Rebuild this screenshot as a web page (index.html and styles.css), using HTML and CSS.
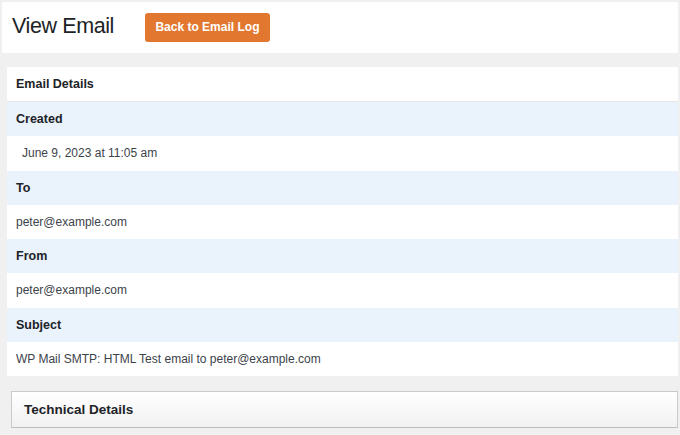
FILE: index.html
```html
<!DOCTYPE html>
<html>
<head>
<meta charset="utf-8">
<link rel="stylesheet" href="styles.css">
</head>
<body>
<div class="page">
  <header class="topbar">
    <h1 class="title">View Email</h1>
    <a class="btn" href="#">Back to Email Log</a>
  </header>
  <main class="content">
    <section class="card">
      <div class="card-head">Email Details</div>
      <div class="row label">Created</div>
      <div class="row value indent">June 9, 2023 at 11:05 am</div>
      <div class="row label">To</div>
      <div class="row value">peter@example.com</div>
      <div class="row label">From</div>
      <div class="row value">peter@example.com</div>
      <div class="row label">Subject</div>
      <div class="row value">WP Mail SMTP: HTML Test email to peter@example.com</div>
    </section>
    <section class="tech">Technical Details</section>
  </main>
</div>
</body>
</html>
```

FILE: styles.css
```css
* { box-sizing: border-box; }
html, body {
  margin: 0;
  padding: 0;
  background: #f0f0f1;
  font-family: "Liberation Sans", Arial, sans-serif;
  color: #1d2327;
}
.page {
  width: 680px;
  height: 435px;
  padding: 2px 2px 0 0;
  overflow: hidden;
}
.topbar {
  margin-left: 2px;
  height: 51px;
  background: #fff;
  display: flex;
  align-items: center;
  padding-left: 10px;
}
.title {
  margin: 0;
  font-size: 21.5px;
  font-weight: 400;
  letter-spacing: -0.4px;
  color: #1d2327;
  padding-bottom: 2px;
}
.btn {
  margin-left: 31px;
  margin-bottom: 1px;
  background: #e27730;
  color: #fff;
  font-weight: 700;
  font-size: 12px;
  text-decoration: none;
  height: 29px;
  width: 125px;
  display: flex;
  align-items: center;
  justify-content: center;
  border-radius: 3px;
}
.content {
  padding: 14px 0 0 7px;
}
.card {
  background: #fff;
}
.card-head {
  height: 35px;
  display: flex;
  align-items: center;
  padding-left: 9px;
  font-weight: 700;
  font-size: 12.5px;
  border-bottom: 1px solid #e6e7e8;
}
.row {
  height: 34.25px;
  display: flex;
  align-items: center;
  padding-left: 9px;
  font-size: 12px;
}
.label {
  background: #eaf2fc;
  font-weight: 700;
  font-size: 12.5px;
  color: #1d2327;
}
.value {
  background: #fff;
  color: #3c434a;
}
.indent {
  padding-left: 15px;
}
.tech {
  margin: 15px 0 0 4px;
  height: 37px;
  border: 1px solid #c9cacc;
  border-bottom-color: #bdbec0;
  background: linear-gradient(#ffffff, #f1f1f1);
  display: flex;
  align-items: center;
  padding-left: 12px;
  font-weight: 700;
  font-size: 13.5px;
  color: #1d2327;
}
```
